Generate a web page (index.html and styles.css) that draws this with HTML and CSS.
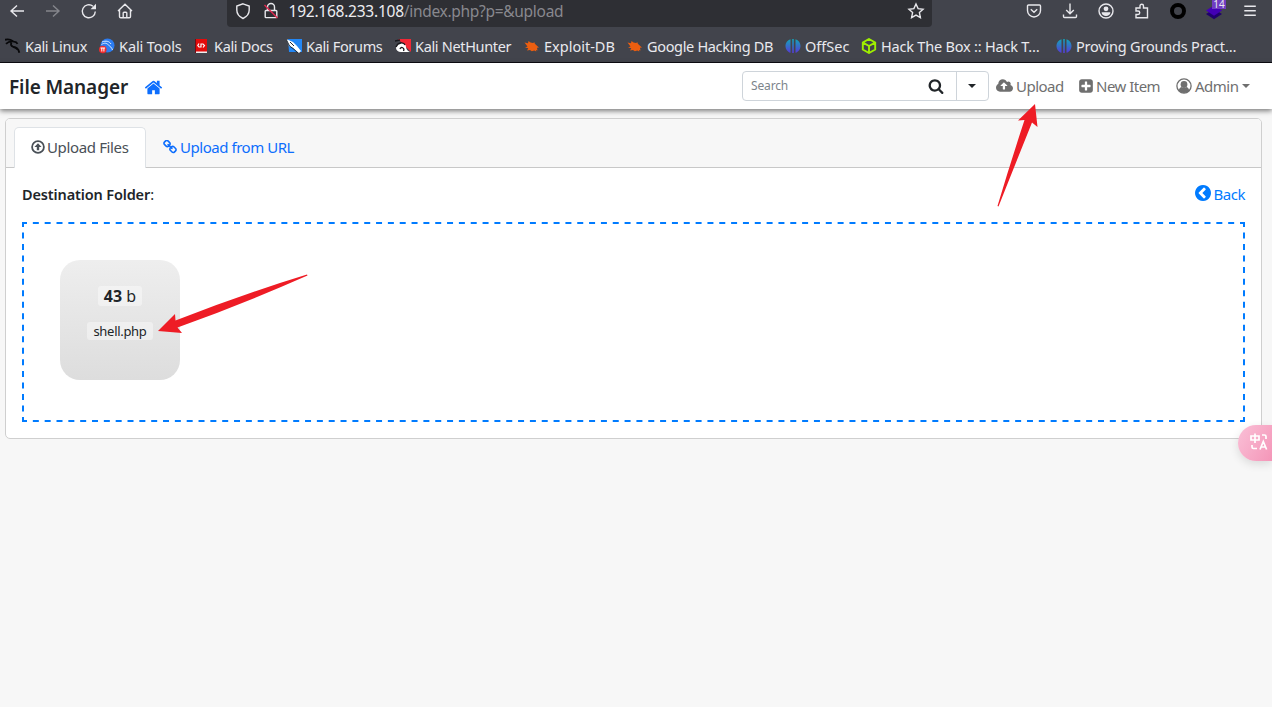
FILE: index.html
```html
<!DOCTYPE html>
<html lang="en">
<head>
<meta charset="utf-8">
<title>File Manager</title>
<link rel="stylesheet" href="styles.css">
</head>
<body>
<header class="browser">
  <div class="toolbar">
    <div class="nav-icons">
      <svg class="ico" viewBox="0 0 16 16"><path d="M15 8H2M8 2.500L2 8l6 5.500"/></svg>
      <svg class="ico dim" viewBox="0 0 16 16"><path d="M1 8h13M8 2.500L14 8l-6 5.500"/></svg>
      <svg class="ico" viewBox="0 0 16 16"><path d="M14.300 8.500A6.500 6.500 0 1 1 12 3.300"/><path class="solid" d="M15 .8v5.400H9.500z"/></svg>
      <svg class="ico" viewBox="0 0 16 16"><path d="M1 8l7-6.800L15 8M2.500 7v6.500q0 1.300 1.300 1.300h8.400q1.300 0 1.300-1.300V7M6.200 14.500V10q0-.8.8-.8h2q.8 0 .8.800v4.500"/></svg>
    </div>
    <div class="address">
      <svg class="ico" viewBox="0 0 16 16"><path d="M8 .8L14.200 3v4c0 3.500-2 6.500-6.200 8.500C3.800 13.500 1.800 10.500 1.800 7V3z"/></svg>
      <svg class="ico" viewBox="0 0 16 16"><path d="M4.500 7V4a3.500 3.500 0 0 1 7 0v3M3 7.500h10q.8 0 .8.800v5.500q0 .8-.8.800H3q-.8 0-.8-.8V8.300q0-.8.800-.8z"/><path class="slash" d="M1.500 2l13 13"/></svg>
      <span class="url"><b>192.168.233.108</b>/index.php?p=&amp;upload</span>
      <svg class="ico star" viewBox="0 0 16 16"><path d="M8 1l2.100 4.600 5 .6-3.700 3.400 1 5L8 12.100l-4.400 2.500 1-5L.9 6.200l5-.6z"/></svg>
    </div>
    <div class="tools">
      <svg class="ico" viewBox="0 0 16 16"><path d="M2.500 2h11q1 0 1 1v4.500a6.500 6.500 0 0 1-13 0V3q0-1 1-1zM4.800 6.200L8 9.300l3.200-3.100"/></svg>
      <svg class="ico" viewBox="0 0 16 16"><path d="M8 .5v10M4.200 7L8 10.800 11.800 7M1.500 11.500v2q0 1 1 1h11q1 0 1-1v-2"/></svg>
      <svg class="ico" viewBox="0 0 16 16"><circle cx="8" cy="8" r="7"/><circle class="solid" cx="8" cy="5.800" r="2.400"/><path class="solid" d="M3.600 9.200h8.800c0 2.500-2.200 3.800-4.400 3.800s-4.400-1.300-4.400-3.800z"/></svg>
      <svg class="ico" viewBox="0 0 16 16"><path d="M2 5h4V3a1.700 1.700 0 0 1 3.500 0v2h4v9.800H2V11.500h2a1.700 1.700 0 0 0 0-3.500H2z"/></svg>
      <svg class="ico" viewBox="0 0 16 16"><circle class="ring" cx="8" cy="8" r="6"/></svg>
      <span class="ext"><svg class="ico" viewBox="0 0 16 16"><path class="layer-low" d="M0 11l8-5 8 5-8 5.200z"/><path class="layer-top" d="M0 7.500l8-5 8 5-8 5.200z"/></svg><i class="badge">14</i></span>
      <svg class="ico" viewBox="0 0 16 16"><path d="M2.300 3.200h11.500M2.300 7.700h11.500M2.300 12.200h11.500"/></svg>
    </div>
  </div>
  <nav class="bookmarks">
    <a class="t3"><svg viewBox="0 0 16 16"><path class="dragon" d="M0 1.800c3-.8 5.500-.4 8 1.400M1 5.800c2-2 5-2.600 8-2.200 2 .2 3 1.200 3.500 2.200M6.500 4.500c-1 2-.5 3.600 1.500 4.200 4 .6 5.500 2 6.300 6M8 8.700c2 1.300 3.500 1 4.500 2.800"/></svg><span>Kali Linux</span></a>
    <a class="t1"><svg viewBox="0 0 16 16"><circle cx="8.500" cy="7.500" r="7" fill="#2c7cf0"/><path d="M3 4c4-1.500 7-1 9 2M2.500 6.500c3-2 5-1.500 7 .5s3 2 4 5" stroke="#dcecff" fill="none"/><circle cx="3.800" cy="11.500" r="3.800" fill="#ee2b2d"/><path d="M1.500 10h4.600M2.800 10v3.500M4.900 10v3.500" stroke="#fff" fill="none"/></svg><span>Kali Tools</span></a>
    <a class="t3"><svg viewBox="0 0 16 16"><path d="M1 1h12v14H1z" fill="#e30b0b"/><path d="M1 13.500h12V15H1z" fill="#eee"/><path d="M1.500 1v14" stroke="#730d15"/><path d="M5 5.500L3.800 7.500 5 9h2V6h2l1.500 1.500L9 9.500" stroke="#fff" fill="none" stroke-width="1.200"/></svg><span>Kali Docs</span></a>
    <a class="t3"><svg viewBox="0 0 16 16"><path d="M2 1h14v13H3z" fill="#2387f5"/><path d="M0 1l7 3 4 4 4 5-2 2-6-5-4-2z" fill="#fff"/><path d="M0 1l3.500 7L7 10.500l5 4.500M4 4l4 4" stroke="#202832" fill="none"/></svg><span>Kali Forums</span></a>
    <a class="t3"><svg viewBox="0 0 16 16"><path d="M3 1h13v13z" fill="#f22735"/><path d="M1 10c0-6 10-7 10-1 .5 3 2 4 4 5H6c-3 0-5-2-5-4z" fill="#fff"/><path d="M0 3l5-1M1 9c2-5 8-5 9-2M5 11c1-3 5-1 3.500 2" stroke="#17171c" fill="none" stroke-width="1.300"/></svg><span>Kali NetHunter</span></a>
    <a><svg viewBox="0 0 16 16"><path class="bug" d="M.5 4.500l3.500.7L4.500 3l2 1.600L9 5l1.500-.8.3 1.600 2.700 2.400 1.500 1.300-2 .3.5 2.700-1.500-.6.3 1.600-2-1-2.500.7L6 12l-3 .5 1.300-2.300L1 9.500l2.500-1z"/></svg><span>Exploit-DB</span></a>
    <a class="t3"><svg viewBox="0 0 16 16"><path class="bug" d="M.5 4.500l3.500.7L4.500 3l2 1.600L9 5l1.500-.8.3 1.600 2.700 2.400 1.500 1.300-2 .3.5 2.700-1.500-.6.3 1.600-2-1-2.500.7L6 12l-3 .5 1.300-2.300L1 9.500l2.500-1z"/></svg><span>Google Hacking DB</span></a>
    <a><svg viewBox="0 0 16 16"><defs><linearGradient id="os" x2="0" y2="1"><stop offset="0" stop-color="#12a5b8"/><stop offset="1" stop-color="#5639d8"/></linearGradient></defs><path fill="url(#os)" d="M5.500 1.200v13.600C2.500 14 .5 11 .5 8s2-6 5-6.800zM7.200 1h1.600v14H7.200zM10.500 1.200c3 .8 5 3.800 5 6.800s-2 6-5 6.800z"/></svg><span>OffSec</span></a>
    <a class="t2"><svg viewBox="0 0 16 16"><path d="M8 1l6.200 3.500v7L8 15l-6.200-3.500v-7zM2 4.600L8 8l6-3.400M8 8v7" stroke="#9fef00" stroke-width="1.900" fill="none"/></svg><span>Hack The Box :: Hack T…</span></a>
    <a class="t2"><svg viewBox="0 0 16 16"><path fill="url(#os)" d="M5.500 1.200v13.600C2.500 14 .5 11 .5 8s2-6 5-6.800zM7.200 1h1.600v14H7.200zM10.500 1.200c3 .8 5 3.800 5 6.800s-2 6-5 6.800z"/></svg><span>Proving Grounds Pract…</span></a>
  </nav>
</header>

<nav class="navbar">
  <strong class="brand">File Manager</strong>
  <svg class="fa home" viewBox="0 0 1792 1792"><path d="M1472 992v480q0 26-19 45t-45 19h-384v-384h-256v384h-384q-26 0-45-19t-19-45v-480q0-1 .5-3t.5-3l575-474 575 474q1 2 1 6zm223-69l-62 74q-8 9-21 11h-3q-13 0-21-7l-692-577-692 577q-12 8-24 7-13-2-21-11l-62-74q-8-10-7-23.500t11-21.500l719-599q32-26 76-26t76 26l244 204v-195q0-14 9-23t23-9h192q14 0 23 9t9 23v408l219 182q10 8 11 21.500t-7 23.500z"/></svg>
  <div class="search">
    <span class="placeholder">Search</span>
    <svg class="fa" viewBox="0 0 1792 1792"><path d="M1216 832q0-185-131.500-316.500t-316.500-131.500-316.500 131.500-131.500 316.500 131.500 316.500 316.500 131.500 316.500-131.500 131.500-316.500zm512 832q0 52-38 90t-90 38q-54 0-90-38l-343-342q-179 124-399 124-143 0-273.500-55.500t-225-150-150-225-55.500-273.500 55.500-273.500 150-225 225-150 273.500-55.500 273.500 55.500 225 150 150 225 55.500 273.500q0 220-124 399l343 343q37 37 37 90z"/></svg>
    <span class="drop"><i class="caret"></i></span>
  </div>
  <a class="item upload"><svg class="fa cloud" viewBox="0 0 1920 1792"><path d="M1280 864q0-14-9-23l-352-352q-9-9-23-9t-23 9l-351 351q-10 12-10 24 0 14 9 23t23 9h224v352q0 13 9.500 22.500t22.500 9.500h192q13 0 22.500-9.500t9.500-22.500v-352h224q13 0 22.500-9.500t9.500-22.500zm640 288q0 159-112.500 271.500t-271.500 112.500h-1088q-185 0-316.500-131.500t-131.500-316.500q0-130 70-240t188-165q-2-30-2-43 0-212 150-362t362-150q156 0 285.500 87t188.500 231q71-62 166-62 106 0 181 75t75 181q0 76-41 138 130 31 213.500 135.500t83.500 238.500z"/></svg><span>Upload</span></a>
  <a class="item new"><svg class="fa" viewBox="128 0 1536 1792"><path d="M1408 960v-128q0-26-19-45t-45-19h-320v-320q0-26-19-45t-45-19h-128q-26 0-45 19t-19 45v320h-320q-26 0-45 19t-19 45v128q0 26 19 45t45 19h320v320q0 26 19 45t45 19h128q26 0 45-19t19-45v-320h320q26 0 45-19t19-45zm256-544v960q0 119-84.500 203.500t-203.500 84.500h-960q-119 0-203.500-84.500t-84.500-203.500v-960q0-119 84.500-203.500t203.500-84.500h960q119 0 203.500 84.500t84.500 203.500z"/></svg><span>New Item</span></a>
  <a class="item admin"><svg class="fa" viewBox="0 0 16 16"><circle cx="8" cy="8" r="7.100" fill="none" stroke="currentColor" stroke-width="1.300"/><circle cx="8" cy="6.500" r="3.400"/><path d="M2.700 12.700c.3-2 1.300-3.400 2.800-3.800 1.500 1.300 3.500 1.300 5 0 1.500.4 2.500 1.800 2.800 3.800-3 3-7.600 3-10.600 0z"/></svg><span>Admin</span><i class="caret"></i></a>
</nav>

<main class="card">
  <div class="tabs">
    <a class="tab active"><svg class="fa" viewBox="0 0 14 16"><circle cx="7" cy="8" r="5.900" fill="none" stroke="currentColor" stroke-width="1.800"/><path d="M7 4.200l3.600 3.700H8.200v3.300H5.800V7.900H3.400z"/></svg><span>Upload Files</span></a>
    <a class="tab link"><svg class="fa" viewBox="64 64 1664 1664"><path d="M1520 1216q0-40-28-68l-208-208q-28-28-68-28-42 0-72 32 3 3 19 18.500t21.500 21.500 15 19 13 25.500 3.500 27.500q0 40-28 68t-68 28q-15 0-27.500-3.500t-25.500-13-19-15-21.500-21.500-18.500-19q-33 31-33 73 0 40 28 68l206 207q27 27 68 27 40 0 68-26l147-146q28-28 28-67zm-703-705q0-40-28-68l-206-207q-28-28-68-28-39 0-68 27l-147 146q-28 28-28 67 0 40 28 68l208 208q27 27 68 27 42 0 72-31-3-3-19-18.500t-21.500-21.500-15-19-13-25.500-3.500-27.500q0-40 28-68t68-28q15 0 27.500 3.500t25.500 13 19 15 21.500 21.500 18.500 19q33-31 33-73zm895 705q0 120-85 203l-147 146q-83 83-203 83-121 0-204-85l-206-207q-83-83-83-203 0-123 88-209l-88-88q-86 88-208 88-120 0-204-84l-208-208q-84-84-84-204t85-203l147-146q83-83 203-83 121 0 204 85l206 207q83 83 83 203 0 123-88 209l88 88q86-88 208-88 120 0 204 84l208 208q84 84 84 204z"/></svg><span>Upload from URL</span></a>
  </div>
  <div class="body">
    <div class="dest"><span><b>Destination Folder</b>:</span><a class="back"><svg class="fa" viewBox="128 128 1536 1536"><path d="M1037 1395l102-102q19-19 19-45t-19-45l-307-307 307-307q19-19 19-45t-19-45l-102-102q-19-19-45-19t-45 19l-454 454q-19 19-19 45t19 45l454 454q19 19 45 19t45-19zm627-499q0 209-103 385.500t-279.500 279.500-385.500 103-385.500-103-279.500-279.500-103-385.500 103-385.500 279.500-279.500 385.500-103 385.500 103 279.500 279.500 103 385.500z"/></svg><span>Back</span></a></div>
    <div class="dropzone">
      <svg class="dashes" viewBox="0 0 1223 200"><path class="h" d="M0 1h1223M0 199h1223"/><path class="v" d="M1 0v200M1222 0v200"/></svg>
      <div class="file"><span class="size"><b>43</b> b</span><span class="name">shell.php</span></div>
    </div>
  </div>
</main>

<svg class="arrows" viewBox="0 0 1272 707"><path d="M1035 104l2.500 23-5.500-4.500Q1015 165 998.500 206.500l-1-.5Q1010 164 1024.500 120l-6.500.5z"/><path d="M158 331l17-17 .500 6.500Q240 295 307 274.500l.5 1Q243 304 177.500 327.500l4.500 5.500z"/></svg>
<div class="translate"><svg viewBox="0 0 18 18"><path d="M1 3h8v4H1zM5 .5v9.500M12 2h2.500q1.500 0 1.500 1.500V6M2 12v2q0 1.500 1.500 1.500H7M10 16.500l3.300-8 3.300 8M11 14h4.500"/></svg></div>
</body>
</html>
```
FILE: styles.css
```css
* { box-sizing: border-box; }
body { margin: 0; width: 1272px; height: 707px; overflow: hidden; position: relative; background: #f7f7f7; color: #212529; font: 14.5px/20px "Noto Sans", sans-serif; }
svg { display: block; flex: none; }
span { white-space: nowrap; }
i { font-style: normal; }

.browser { height: 63px; background: #42444c; border-bottom: 1px solid #0c0c12; color: #e9e9ee; }
.toolbar { height: 27px; display: flex; align-items: flex-start; }
.ico { width: 16px; height: 16px; fill: none; stroke: #e8e8ec; stroke-width: 1.4; overflow: visible; }
.ico .solid { fill: #e8e8ec; stroke: none; }
.dim { opacity: .4; }
.nav-icons { display: flex; gap: 20px; padding: 3px 0 0 9px; width: 227px; }
.address { width: 705px; height: 27px; border-radius: 0 0 4px 4px; background: #2e2f34; display: flex; padding: 3px 8px 0; }
.address .ico + .ico { margin-left: 12px; }
.ico .slash { stroke: #e22850; }
.url { margin: -1px 0 0 9.5px; color: #88888e; font-size: 15.5px; line-height: 19px; letter-spacing: -.3px; }
.url b { font-weight: 400; color: #ececf0; letter-spacing: -.24px; }
.address .star { margin-left: auto; }
.tools { display: flex; gap: 20px; padding: 3px 0 0 94px; }
.ico .ring { stroke: #000; stroke-width: 4; }
.ext { position: relative; }
.ico .layer-low { fill: #20006e; stroke: none; }
.ico .layer-top { fill: #4300b5; stroke: none; }
.badge { position: absolute; left: 6px; top: -3px; width: 14px; height: 9px; background: #6f3cc2; font-size: 10px; line-height: 9px; text-align: center; }
.bookmarks { display: grid; grid-template-columns: 94px 95px 92px 109px 129px 103px 158px 76px 195px 190px; height: 35px; padding: 2px 0 0 5px; }
.bookmarks a { display: flex; align-items: center; gap: 4px; height: 34px; }
.bookmarks svg { width: 16px; height: 16px; }
.bookmarks .t1 { letter-spacing: -.1px; }
.bookmarks .t2 { letter-spacing: -.2px; }
.bookmarks .t3 { letter-spacing: -.33px; }
.dragon { fill: none; stroke: #08080a; stroke-width: 1.8; }
.bug { fill: #ec5e10; }

.navbar { position: relative; height: 46px; background: #fff; display: flex; align-items: center; padding-left: 9px; box-shadow: 0 2px 5px rgba(0,0,0,.5); color: #6f6f6f; }
.fa { width: 16px; height: 16px; fill: currentColor; }
.brand { width: 135px; font-size: 19px; font-weight: 600; color: #212529; letter-spacing: -.1px; padding-top: 2px; }
.home { width: 19px; height: 19px; color: #0d6efd; margin-top: 3px; }
.search { margin-left: 579px; width: 247px; height: 30px; border: 1px solid #ced4da; border-radius: 4px; display: flex; align-items: center; padding-left: 8px; color: #212529; }
.placeholder { width: 177px; font-size: 12px; color: #7c848b; letter-spacing: -.15px; }
.drop { width: 32px; height: 28px; border-left: 1px solid #ced4da; margin-left: auto; padding-right: 1px; display: grid; place-items: center; }
.caret { border: 4px solid transparent; border-top-color: currentColor; border-bottom: 0; }
.item { display: flex; align-items: center; font-size: 15px; letter-spacing: -.52px; }
.upload { margin-left: 7px; width: 83px; gap: 3px; }
.cloud { width: 17px; }
.new { width: 97px; gap: 3px; }
.new .fa { width: 14px; }
.admin { gap: 3px; }
.admin .caret { margin-left: 1px; }

.card { margin: 9px 10px 0 5px; height: 321px; background: #fff; border: 1px solid #cfcfcf; border-radius: 5px; overflow: hidden; }
.tabs { height: 49px; background: #f7f7f7; border-bottom: 1px solid #c8c8c8; display: flex; padding: 8px 0 0 8px; }
.tab { height: 41px; display: flex; align-items: center; gap: 3px; font-size: 15px; letter-spacing: -.36px; padding-bottom: 1px; }
.active { width: 132px; padding: 0 0 2px 16px; gap: 2px; color: #495057; background: #fff; border: 1px solid #dee2e6; border-bottom: 0; border-radius: 5px 5px 0 0; }
.active .fa { width: 14px; }
.link { padding-left: 17px; color: #0d6efd; letter-spacing: -.46px; }
.link .fa { width: 14px; height: 14px; }
.body { padding: 16px 16px 0; }
.dest { height: 20px; display: flex; justify-content: space-between; letter-spacing: -.14px; }
.dest b { font-weight: 600; }
.back { display: flex; align-items: center; gap: 3px; color: #007bff; font-size: 15px; letter-spacing: -.5px; }
.back .fa { margin-top: -2px; }
.dropzone { position: relative; margin-top: 18px; width: 1223px; height: 200px; padding: 38px; }
.dashes { position: absolute; left: 0; top: 0; width: 1223px; height: 200px; stroke: #007bff; stroke-width: 2; fill: none; }
.h { stroke-dasharray: 6 5.835; stroke-dashoffset: 1; }
.v { stroke-dasharray: 6 5.53; stroke-dashoffset: 1; }
.file { width: 120px; height: 120px; border-radius: 20px; background: linear-gradient(#eee, #ddd); display: flex; flex-direction: column; align-items: center; padding-top: 26px; }
.size, .name { background: rgba(255,255,255,.4); border-radius: 3px; }
.size { width: 44px; height: 20px; line-height: 20px; font-size: 16px; text-align: center; }
.name { width: 66px; height: 18px; line-height: 19px; font-size: 13px; letter-spacing: -.3px; margin-top: 16px; text-align: center; }

.arrows { position: absolute; inset: 0; width: 1272px; height: 707px; fill: #ee1c25; }
.translate { position: absolute; left: 1238px; top: 425px; width: 34px; height: 36px; border-radius: 18px 0 0 18px; background: linear-gradient(120deg, #fac0d7, #f496b8); box-shadow: 0 3px 10px rgba(0,0,0,.12); padding: 8px 0 0 12px; }
.translate svg { width: 18px; height: 18px; fill: none; stroke: #fff; stroke-width: 1.7; }
```
